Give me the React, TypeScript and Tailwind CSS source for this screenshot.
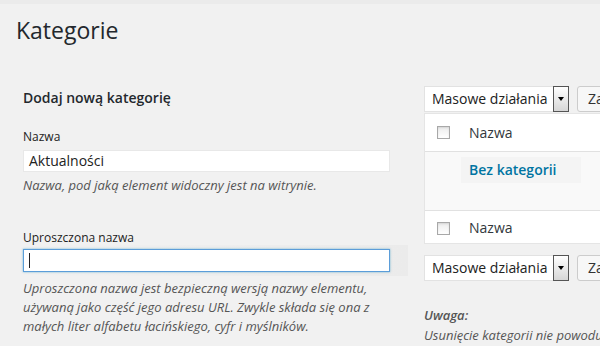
import React from 'react';

function BulkSelect() {
  return (
    <div className="flex items-stretch h-[26px] gap-2">
      <div className="flex items-stretch w-[145px] bg-white border border-[#e2e2e2]">
        <span className="flex-1 pl-[7px] text-[14px] leading-[24px] text-[#222]">Masowe działania</span>
        <span className="w-[16px] -my-px -mr-px border border-[#555] bg-gradient-to-b from-white to-[#d6d6d6] flex items-center justify-center">
          <span className="w-0 h-0 border-l-[3.5px] border-r-[3.5px] border-t-[4px] border-l-transparent border-r-transparent border-t-black" />
        </span>
      </div>
      <div className="w-[40px] bg-[#f7f7f7] border border-[#cccccc] rounded-[3px] pl-[10px] text-[14px] leading-[24px] text-[#333] overflow-hidden whitespace-nowrap">Zastosuj</div>
    </div>
  );
}

function Checkbox() {
  return <span className="block w-[13px] h-[13px] border border-[#a8a8a8] bg-gradient-to-b from-[#ececec] to-white shadow-[inset_0_1px_2px_rgba(0,0,0,0.1)]" />;
}

export default function App() {
  return (
    <div className="w-[600px] h-[346px] overflow-hidden bg-[#f1f1f1] border-t-4 border-[#ebebeb] font-['Open_Sans',sans-serif] text-[#444]">
      {/* nagłówek strony */}
      <h1 className="pl-[16px] pt-[10px] text-[23px] leading-[32px] text-[#23282d] font-normal">Kategorie</h1>

      <div className="flex mt-[40px]">
        {/* lewa kolumna: formularz */}
        <div className="w-[424px] shrink-0 pl-[23px]">
          <h3 className="mt-[2px] text-[14px] leading-[20px] font-semibold text-[#23282d]">Dodaj nową kategorię</h3>

          <label className="block mt-[21px] text-[12px] leading-[16px] text-[#222]">Nazwa</label>
          <div className="mt-[5px] w-[367px] h-[22px] bg-white border border-[#e8e8e8] pl-[5px] text-[14px] leading-[20px] text-[#222]">Aktualności</div>
          <p className="mt-[4px] text-[13px] leading-[19px] italic text-[#555]">Nazwa, pod jaką element widoczny jest na witrynie.</p>

          <label className="block mt-[35px] text-[12px] leading-[16px] text-[#222]">Uproszczona nazwa</label>
          <div className="mt-[-1px] w-[386px] py-[4px] -ml-[1px] pl-[1px] bg-gradient-to-r from-[#f1f1f1] to-[#ebebeb]">
            <div className="w-[367px] h-[23px] bg-white border border-[#5b9dd9] shadow-[0_0_2px_rgba(30,140,190,0.6)] pl-[5px] flex items-center">
              <span className="w-px h-[15px] bg-[#222]" />
            </div>
          </div>
          <p className="mt-[3px] w-[372px] text-[13px] leading-[19px] italic text-[#555]">
            Uproszczona nazwa jest bezpieczną wersją nazwy elementu, używaną jako część jego adresu URL. Zwykle składa się ona z małych liter alfabetu łacińskiego, cyfr i myślników.
          </p>
        </div>

        {/* prawa kolumna: tabela */}
        <div className="w-[300px] shrink-0">
          <BulkSelect />

          <div className="mt-px bg-white border border-[#e5e5e5]">
            <div className="h-[38px] flex items-center border-b border-[#e1e1e1]">
              <span className="pl-[12px] w-[44px]"><Checkbox /></span>
              <span className="text-[14px] text-[#32373c]">Nazwa</span>
            </div>
            <div className="h-[58px] bg-[#f9f9f9] pt-[5px] pl-[36px]">
              <span className="inline-block w-[120px] h-[26px] bg-[#f4f4f4] pl-[8px] text-[14px] leading-[26px] font-semibold text-[#0074a2]">Bez kategorii</span>
            </div>
            <div className="h-[33px] flex items-center border-t border-[#e1e1e1]">
              <span className="pl-[12px] w-[44px] pt-[3px]"><Checkbox /></span>
              <span className="text-[14px] text-[#32373c]">Nazwa</span>
            </div>
          </div>

          <div className="mt-[11px]">
            <BulkSelect />
          </div>

          <p className="mt-[24px] text-[13px] leading-[20px] italic font-semibold text-[#555]">Uwaga:</p>
          <p className="text-[13px] leading-[20px] italic text-[#555] whitespace-nowrap">Usunięcie kategorii nie powoduje usunięcia wpisów</p>
        </div>
      </div>
    </div>
  );
}
